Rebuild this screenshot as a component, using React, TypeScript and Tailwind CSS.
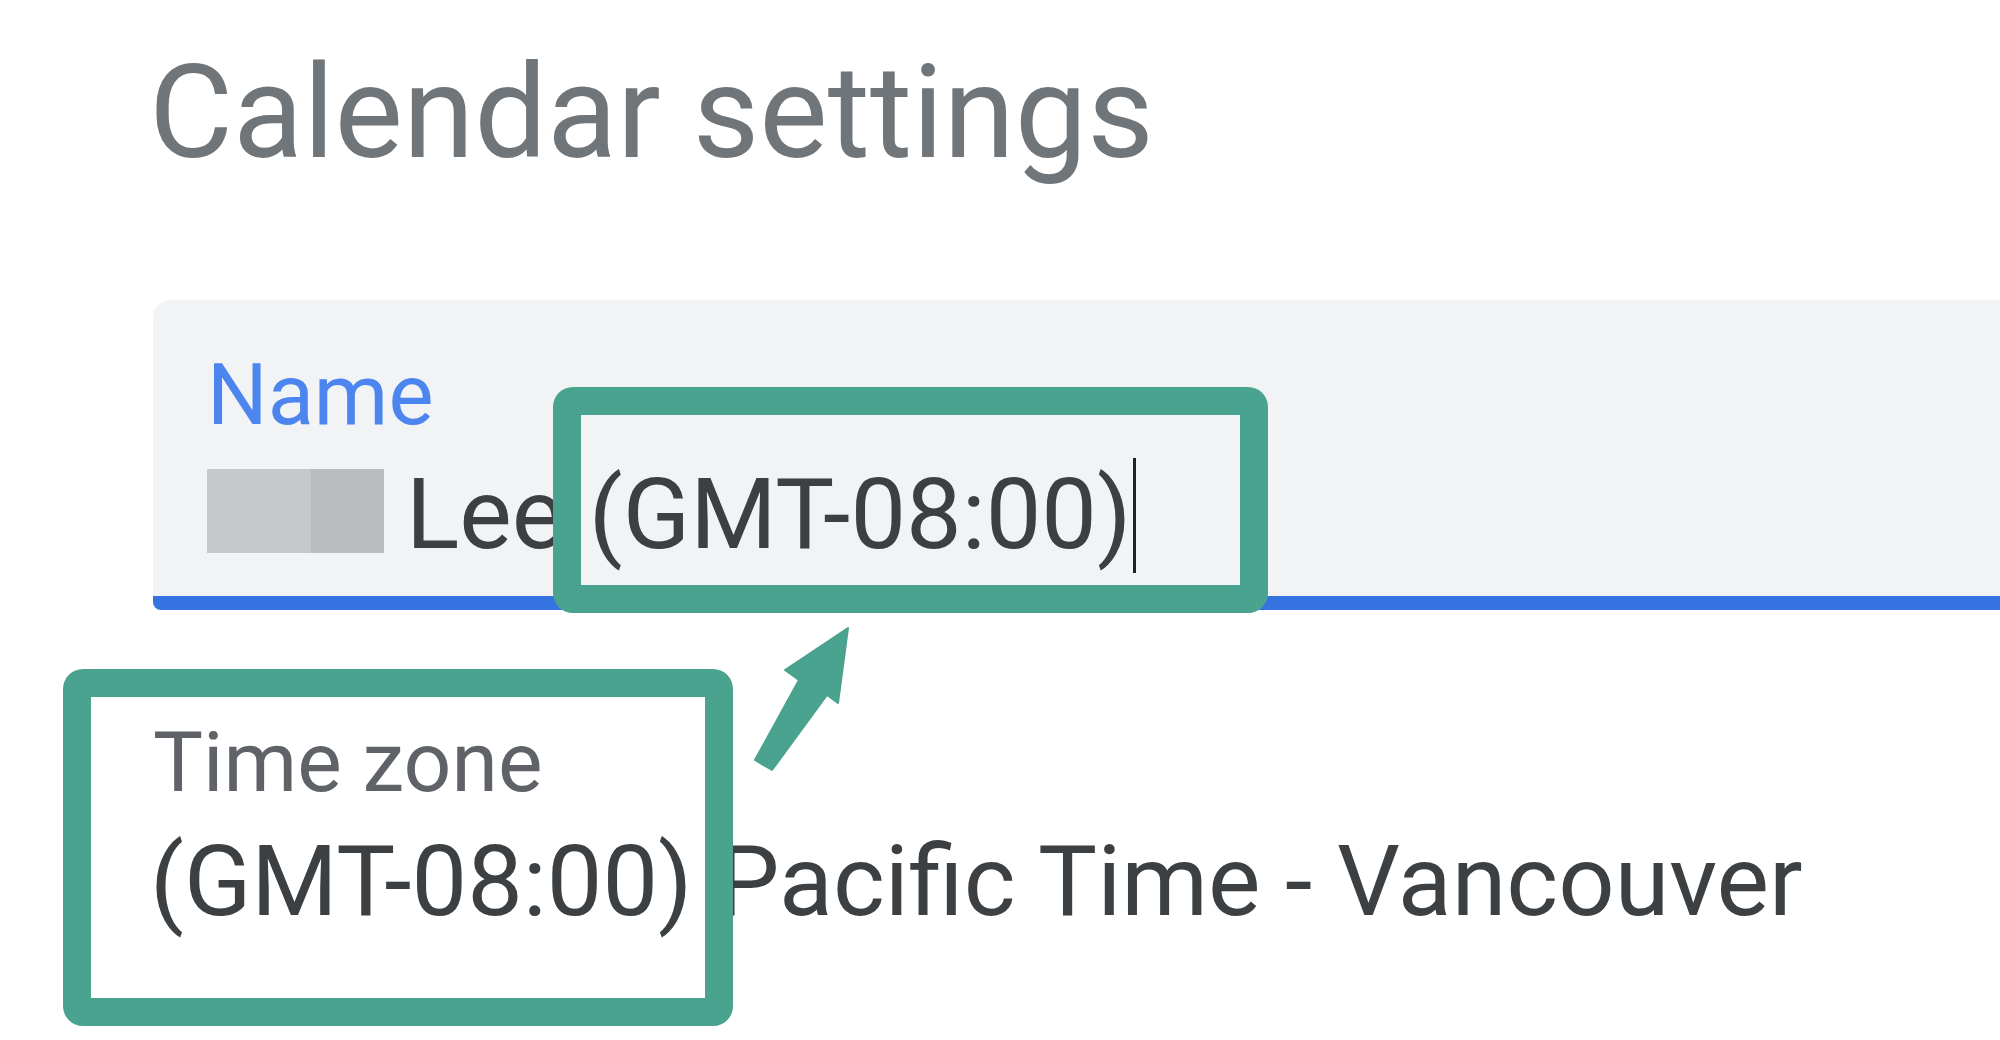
const teal = "#4aa38f";

function CalloutBox({ className }: { className: string }) {
  return (
    <div
      className={`pointer-events-none absolute rounded-[20px] border-[28px] border-[#4aa38f] ${className}`}
    />
  );
}

function Arrow() {
  return (
    <svg
      className="pointer-events-none absolute left-0 top-0"
      width={2000}
      height={1040}
      viewBox="0 0 2000 1040"
    >
      <polygon
        points="848,628 785,670 799,680 755,760 772,770 827,695 838,703"
        fill={teal}
        stroke={teal}
        strokeWidth={2}
        strokeLinejoin="round"
      />
    </svg>
  );
}

export default function App() {
  return (
    <div
      className="relative h-[1040px] w-[2000px] overflow-hidden bg-white pl-[153px] pt-[49px]"
      style={{ fontFamily: "Roboto, 'Liberation Sans', sans-serif" }}
    >
      <h1 className="ml-[-4px] text-[129px] leading-[128px] font-normal text-[#70757a]">
        Calendar settings
      </h1>

      {/* name field, focused */}
      <div className="mt-[123px] w-[1900px] rounded-t-[18px] rounded-b-[8px] border-b-[14px] border-[#3574e0] bg-[#f1f3f4] pb-[32px] pl-[54px] pt-[53px]">
        <p className="text-[85px] leading-[85px] text-[#4c85ee]">Name</p>
        <div className="mt-[27px] flex h-[99px] items-start">
          <div className="mt-[4px] flex h-[84px]">
            <span className="w-[104px] bg-[#c7c8ca]" />
            <span className="w-[73px] bg-[#bbbcbe]" />
          </div>
          <span className="ml-[22px] whitespace-pre text-[99px] leading-[99px] text-[#3c4043]">
            Lee (GMT-08:00)
          </span>
          <span className="ml-[2px] mt-[-7px] h-[115px] w-[3px] shrink-0 bg-[#202124]" />
        </div>
      </div>

      <div className="mt-[110px]">
        <p className="text-[84px] leading-[85px] text-[#5f6368]">Time zone</p>
        <p className="ml-[-3px] mt-[27px] whitespace-pre text-[99px] leading-[99px] text-[#3c4043]">
          (GMT-08:00) Pacific Time - Vancouver
        </p>
      </div>

      <CalloutBox className="left-[553px] top-[387px] h-[226px] w-[715px]" />
      <CalloutBox className="left-[63px] top-[669px] h-[357px] w-[670px]" />
      <Arrow />
    </div>
  );
}
